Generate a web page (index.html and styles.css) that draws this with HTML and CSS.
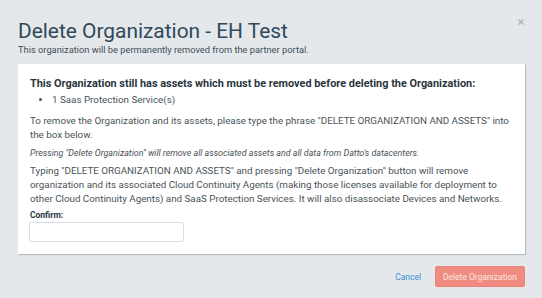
FILE: index.html
```html
<!DOCTYPE html>
<html lang="en">
<head>
  <meta charset="UTF-8" />
  <title>Delete Organization</title>
  <link rel="stylesheet" href="styles.css">
</head>
<body>
  <div class="modal">
    <header class="modal-header">
      <h1>Delete Organization - EH Test</h1>
      <p class="subtitle">This organization will be permanently removed from the partner portal.</p>
      <button class="close-btn" aria-label="Close">
        <svg width="6" height="6" viewBox="0 0 6 6"><path d="M0.5 0.5 L5.5 5.5 M5.5 0.5 L0.5 5.5" stroke="#a9b1b6" stroke-width="1.2" fill="none"/></svg>
      </button>
    </header>

    <section class="panel">
      <p class="warning">This Organization still has assets which must be removed before deleting the Organization:</p>
      <ul class="asset-list">
        <li>1 Saas Protection Service(s)</li>
      </ul>
      <p>To remove the Organization and its assets, please type the phrase "DELETE ORGANIZATION AND ASSETS" into<br>the box below.</p>
      <p class="note">Pressing "Delete Organization" will remove all associated assets and all data from Datto's datacenters.</p>
      <p>Typing "DELETE ORGANIZATION AND ASSETS" and pressing "Delete Organization" button will remove organization and its associated Cloud Continuity Agents (making those licenses available for deployment to other Cloud Continuity Agents) and SaaS Protection Services. It will also disassociate Devices and Networks.</p>
      <label class="confirm-label" for="confirm">Confirm:</label>
      <input class="confirm-input" id="confirm" type="text">
    </section>

    <footer class="modal-footer">
      <button class="cancel-btn">Cancel</button>
      <button class="delete-btn">Delete Organization</button>
    </footer>
  </div>
</body>
</html>
```

FILE: styles.css
```css
* {
  margin: 0;
  padding: 0;
  box-sizing: border-box;
}

body {
  font-family: Roboto, 'Liberation Sans', sans-serif;
  background-color: #e4e8eb;
  color: #4a5359;
  width: 542px;
  height: 298px;
  overflow: hidden;
}

.modal {
  padding: 18px 17px 0 18px;
}

.modal-header {
  position: relative;
  margin-bottom: 8px;
}

.modal-header h1 {
  font-size: 20.9px;
  font-weight: 400;
  color: #30495a;
  line-height: 26px;
}

.subtitle {
  font-size: 9.3px;
  color: #3e4e58;
  line-height: 12px;
}

.close-btn {
  position: absolute;
  top: 1px;
  right: 1px;
  width: 6px;
  height: 6px;
  background: none;
  border: none;
  cursor: pointer;
}

.close-btn svg {
  display: block;
}

.panel {
  background-color: #fff;
  padding: 13px 8px 12px 12px;
  box-shadow: 1px 1px 1px #b4bcc1;
  font-size: 9.8px;
  line-height: 14px;
}

.panel p {
  margin-bottom: 4px;
}

.panel .warning {
  font-size: 10.9px;
  line-height: 14px;
  font-weight: 700;
  color: #2a3640;
  margin-bottom: 2px;
}

.asset-list {
  padding-left: 22px;
  margin-bottom: 7px;
}

.note {
  font-style: italic;
  font-size: 8.9px;
}

.confirm-label {
  display: block;
  font-weight: 700;
  font-size: 8.5px;
  line-height: 10px;
  color: #2a3640;
  margin-top: 1px;
  margin-bottom: 2px;
}

.confirm-input {
  display: block;
  width: 155px;
  height: 20px;
  border: 1px solid #d8dde0;
  border-radius: 2px;
  margin-left: -1px;
}

.modal-footer {
  display: flex;
  justify-content: flex-end;
  align-items: center;
  gap: 14px;
  margin-top: 12px;
}

.cancel-btn {
  background: none;
  border: none;
  color: #3d8fd1;
  font-family: inherit;
  font-size: 8.5px;
  cursor: pointer;
}

.delete-btn {
  background-color: #ef8b80;
  color: #fde6e2;
  border: 1px solid #ea8478;
  border-radius: 2px;
  font-family: inherit;
  font-size: 8.5px;
  width: 90px;
  height: 21px;
  cursor: pointer;
}
```
